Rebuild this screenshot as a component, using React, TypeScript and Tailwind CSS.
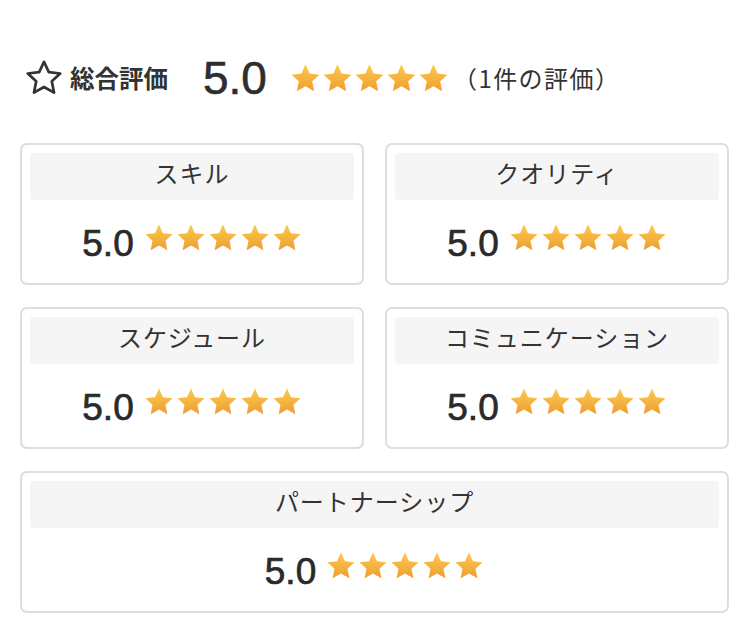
import React, { useId } from "react";

const STAR_POINTS =
  "12,1.2 15.2,8.1 22.8,9 17.2,14.2 18.7,21.8 12,18 5.3,21.8 6.8,14.2 1.2,9 8.8,8.1";

function Star({ size }: { size: number }) {
  const id = useId();
  return (
    <svg width={size} height={size} viewBox="0 0 24 24" className="shrink-0">
      <defs>
        <linearGradient id={id} x1="0" y1="0" x2="0" y2="1">
          <stop offset="0%" stopColor="#fbcb4f" />
          <stop offset="100%" stopColor="#ef9d31" />
        </linearGradient>
      </defs>
      <polygon points={STAR_POINTS} fill={`url(#${id})`} />
    </svg>
  );
}

function Stars({ size, gap }: { size: number; gap: string }) {
  return (
    <div className={`flex items-center ${gap}`}>
      {[0, 1, 2, 3, 4].map((i) => (
        <Star key={i} size={size} />
      ))}
    </div>
  );
}

function Card({ title, className = "" }: { title: string; className?: string }) {
  return (
    <div
      className={`flex h-[142px] flex-col rounded-[7px] border-2 border-[#dedede] bg-white p-[8px] ${className}`}
    >
      <div className="flex h-[47px] items-center justify-center rounded-[4px] bg-[#f5f5f5] pb-[7px] text-[24px] leading-none tracking-[0.04em] text-[#333]">
        {title}
      </div>
      <div className="flex flex-1 items-center justify-center gap-[10px] pt-[11px]">
        <span className="font-['Liberation_Sans',sans-serif] text-[37px] leading-none text-[#2a2a2a] [-webkit-text-stroke:0.7px_#2a2a2a]">
          5.0
        </span>
        <div className="-mt-[10px]">
          <Stars size={30} gap="gap-[2px]" />
        </div>
      </div>
    </div>
  );
}

export default function App() {
  return (
    <div className="min-h-[644px] w-[749px] bg-white px-[20px] pt-[55px] font-['Noto_Sans_CJK_JP',sans-serif] text-[#333]">
      <div className="flex h-[46px] items-center">
        <svg width="36" height="36" viewBox="0 0 24 24" className="ml-[6px] shrink-0">
          <polygon
            points={STAR_POINTS}
            fill="none"
            stroke="#333"
            strokeWidth="1.8"
            strokeLinejoin="round"
          />
        </svg>
        <span className="ml-[8px] text-[24.5px] font-bold leading-none text-[#333]">総合評価</span>
        <span className="ml-[35px] font-['Liberation_Sans',sans-serif] text-[46px] leading-none text-[#2e2e2e] [-webkit-text-stroke:0.6px_#2e2e2e]">
          5.0
        </span>
        <div className="ml-[23px]">
          <Stars size={31} gap="gap-[1px]" />
        </div>
        <span className="ml-[4px] text-[24px] leading-none tracking-[0.06em] text-[#333]">（1件の評価）</span>
      </div>

      <div className="mt-[42px] grid grid-cols-2 gap-x-[21px] gap-y-[22px]">
        <Card title="スキル" />
        <Card title="クオリティ" />
        <Card title="スケジュール" />
        <Card title="コミュニケーション" />
        <Card title="パートナーシップ" className="col-span-2" />
      </div>
    </div>
  );
}
